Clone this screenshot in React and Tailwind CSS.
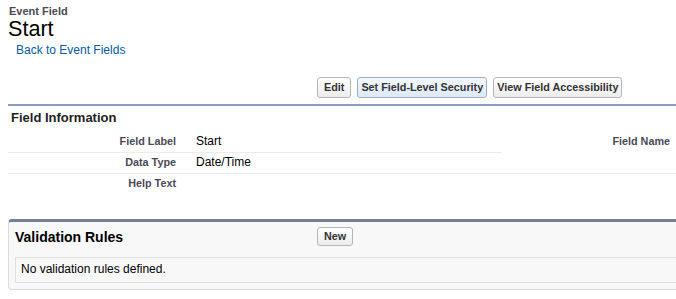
export default function App() {
  const btn =
    "h-[21px] flex items-center border border-[#b5b5b5] rounded-[3px] bg-gradient-to-b from-[#ffffff] to-[#ececec] text-[10.8px] font-bold text-[#333] leading-none";
  return (
    <div className="w-[676px] h-[299px] overflow-hidden bg-white font-['Liberation_Sans',Arial,sans-serif] text-black">
      <div className="pt-[5px] pl-[9px]">
        <div className="text-[11px] leading-[13px] font-bold text-[#4a4a56]">Event Field</div>
        <div className="text-[21.6px] leading-[22px] text-black -ml-[1px]">Start</div>
        <div className="mt-[3px] ml-[7px] text-[12px] leading-[14px] text-[#015ba7]">Back to Event Fields</div>
      </div>

      <div className="mt-[20px] flex gap-[6px] pl-[317px]">
        <div className={btn + " px-[6px]"}>Edit</div>
        <div className="h-[21px] flex items-center border border-[#9fb0c6] rounded-[3px] bg-gradient-to-b from-[#f3f8fe] to-[#dde9f7] text-[10.8px] font-bold text-[#333] leading-none px-[3px]">
          Set Field-Level Security
        </div>
        <div className={btn + " px-[3px]"}>View Field Accessibility</div>
      </div>

      <div className="mt-[6px] ml-[8px] border-t-2 border-[#8e9dbe]">
        <div className="pt-[4px] pl-[3px] text-[13px] leading-[15px] font-bold text-[#222]">Field Information</div>
        <div className="mt-[7px] w-[680px]">
          <div className="flex h-[21px]">
            <div className="w-[494px] flex items-baseline pt-[2px] border-b border-[#ececec]">
              <div className="w-[178px] pr-[10px] text-right text-[10.8px] leading-[14px] font-bold text-[#4a4a56]">Field Label</div>
              <div className="pl-[10px] text-[12px] leading-[14px]">Start</div>
            </div>
            <div className="flex items-baseline pt-[2px]">
              <div className="w-[178px] pr-[10px] text-right text-[10.8px] leading-[14px] font-bold text-[#4a4a56]">Field Name</div>
            </div>
          </div>
          <div className="flex items-baseline h-[21px] pt-[2px] border-b border-[#ececec]">
            <div className="w-[178px] pr-[10px] text-right text-[10.8px] leading-[14px] font-bold text-[#4a4a56]">Data Type</div>
            <div className="pl-[10px] text-[12px] leading-[14px]">Date/Time</div>
          </div>
          <div className="flex items-baseline h-[21px] pt-[2px]">
            <div className="w-[178px] pr-[10px] text-right text-[10.8px] leading-[14px] font-bold text-[#4a4a56]">Help Text</div>
            <div className="pl-[10px] text-[12px] leading-[14px]"></div>
          </div>
        </div>
      </div>

      <div className="mt-[24px] ml-[8px] w-[680px] bg-[#f8f8f8] border-t-[3px] border-t-[#747e96] border-l border-b border-l-[#dcdcdc] border-b-[#dcdcdc] rounded-tl-[4px] rounded-bl-[4px] pb-[6px]">
        <div className="flex items-start pt-[5px]">
          <div className="w-[308px] pl-[6px] mt-[2px] text-[14px] leading-[16px] font-bold text-[#000]">Validation Rules</div>
          <div className="h-[19px] flex items-center border border-[#b5b5b5] rounded-[3px] bg-gradient-to-b from-[#ffffff] to-[#ececec] text-[10.8px] font-bold text-[#333] leading-none px-[6px]">
            New
          </div>
        </div>
        <div className="mt-[11px] ml-[6px] border-t border-b border-l border-[#e0e0e0] h-[26px] pt-[4px] pl-[5px] text-[12px] leading-[14px]">
          No validation rules defined.
        </div>
      </div>
    </div>
  );
}
